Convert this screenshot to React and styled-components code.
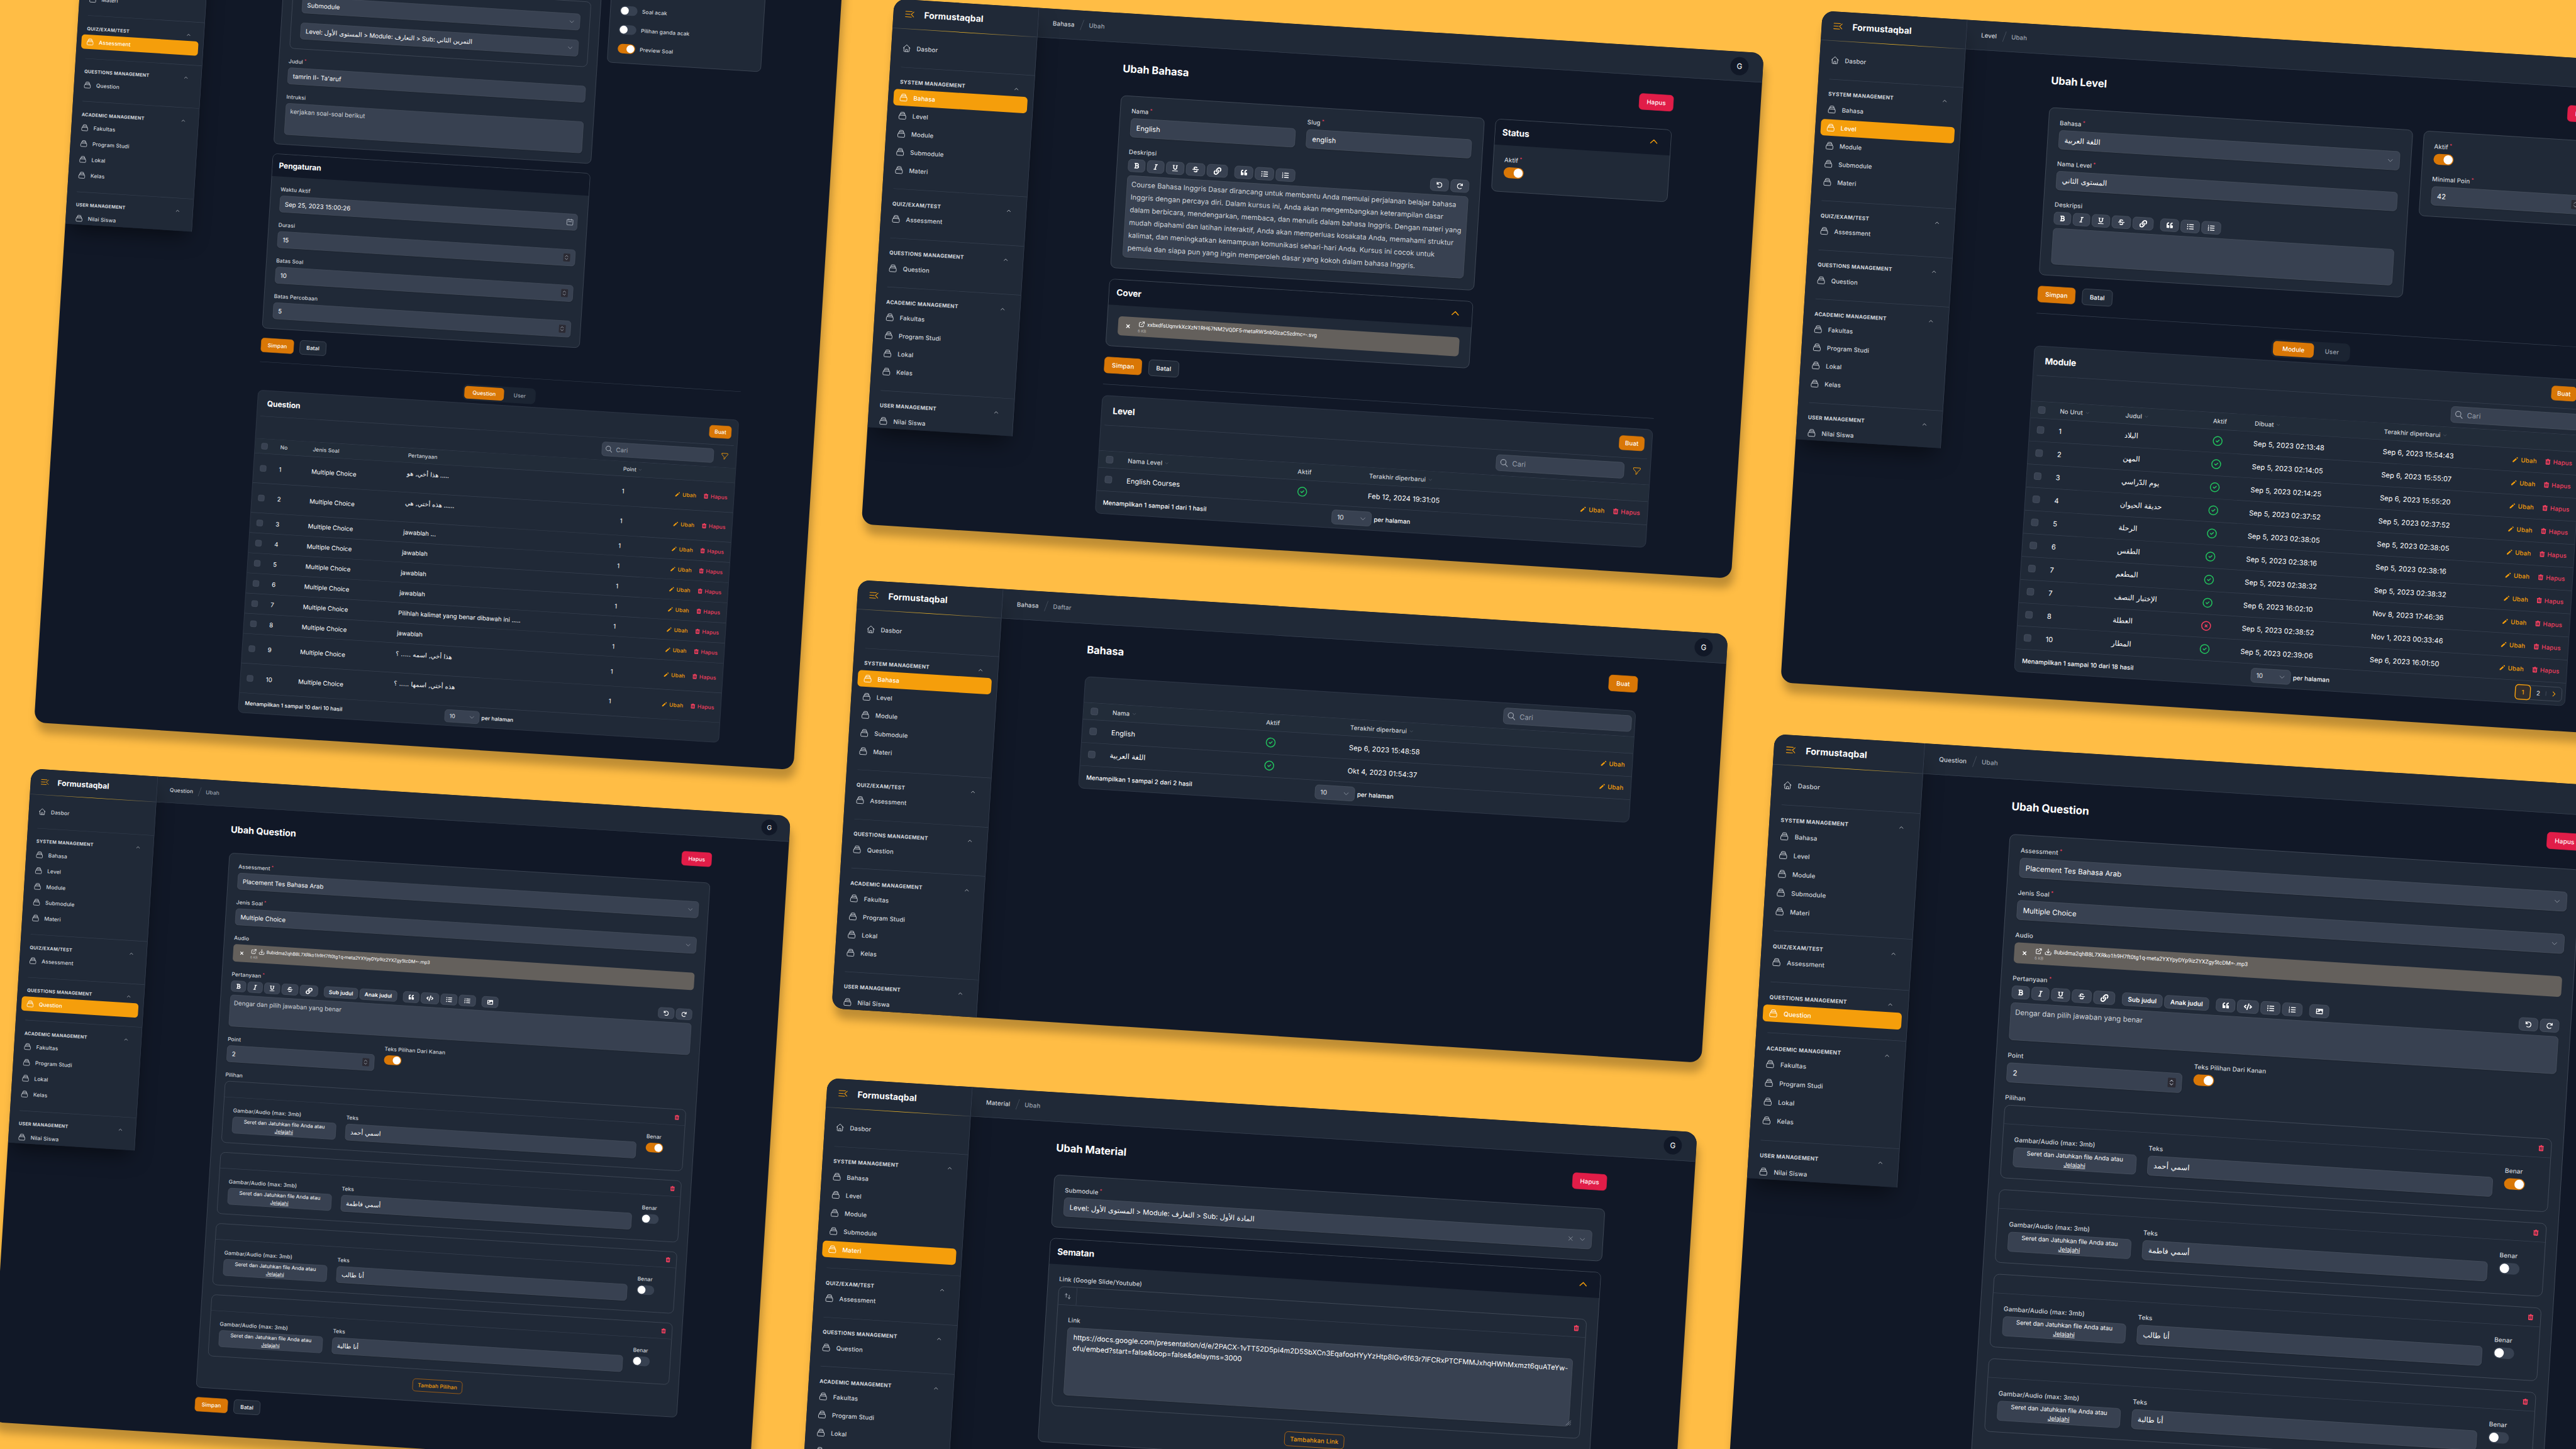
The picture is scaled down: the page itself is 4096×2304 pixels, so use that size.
import React from "react";
import styled, { createGlobalStyle, css } from "styled-components";
import { FaBold, FaItalic, FaUnderline, FaStrikethrough, FaLink, FaQuoteLeft, FaListUl, FaListOl, FaCode, FaImage, FaUndo, FaRedo } from "react-icons/fa";

const c = {
  canvas: "#ffbd45",
  page: "#111827",
  panel: "#202937",
  field: "#384151",
  line: "#374151",
  edge: "#4b5563",
  text: "#ffffff",
  soft: "#d1d5db",
  mute: "#9ca3af",
  amber: "#f59e0b",
  primary: "#d97706",
  danger: "#e11d48",
  rose: "#f43f5e",
  green: "#22c55e",
};

const type = (size, weight = 400, track = 0.004) => css`
  font-size: ${size * 0.96}px;
  font-weight: ${weight};
  letter-spacing: ${track}em;
`;

const GlobalStyle = createGlobalStyle`
  * { box-sizing: border-box; }
  html, body { margin: 0; padding: 0; background: ${c.canvas}; }
  body { font-family: Inter, "Liberation Sans", "DejaVu Sans", sans-serif; color: ${c.text}; }
`;

/* ---------- canvas and window shell ---------- */

const Canvas = styled.main`
  position: relative;
  width: 4096px;
  height: 2304px;
  overflow: hidden;
  background: ${c.canvas};
`;

const WindowFrame = styled.article`
  position: absolute;
  left: ${(p) => p.$x}px;
  top: ${(p) => p.$y}px;
  width: 1920px;
  height: ${(p) => p.$h}px;
  display: flex;
  align-items: flex-start;
  overflow: hidden;
  background: ${c.page};
  border-radius: ${(p) => 18.5 / p.$s}px;
  transform: rotate(3.58deg) scale(${(p) => p.$s});
  transform-origin: 0 0;
  box-shadow: ${(p) => `${4.3 / p.$s}px ${16 / p.$s}px ${14 / p.$s}px rgba(0,0,0,0.25)`};
`;

const Sidebar = styled.aside`
  position: relative;
  z-index: 1;
  flex: none;
  width: 320px;
  height: 946px;
  overflow: hidden;
  background: ${c.panel};
  border-right: 1px solid ${c.line};
`;

const SidebarShade = styled.div`
  position: relative;
  z-index: 1;
  flex: none;
  height: 946px;
  box-shadow: 0 25px 50px -12px rgba(0, 0, 0, 0.5);
`;

const Brand = styled.div`
  height: 64px;
  display: flex;
  align-items: center;
  gap: 20px;
  padding-left: 24px;
`;

const BrandName = styled.span`
  ${type(20, 700, 0.005)}
`;

const BrandLine = styled.div`
  height: 1px;
  background: linear-gradient(to right, ${c.line}, #fbbf24, ${c.line});
`;

const Nav = styled.nav`
  padding: 24px 12px 0;
`;

const NavItem = styled.div`
  height: 36px;
  width: 295px;
  display: flex;
  align-items: center;
  gap: 12px;
  padding: 0 12px;
  border-radius: 8px;
  ${type(14, 500, 0.01)}
  color: ${(p) => (p.$active ? "#fff" : c.soft)};
  background: ${(p) => (p.$active ? c.amber : "transparent")};
`;

const NavGroup = styled.section`
  margin-top: 23.5px;
`;

const NavRule = styled.div`
  height: 1px;
  margin: 0 -12px 0 12px;
  background: ${c.line};
`;

const NavHeading = styled.div`
  height: 20px;
  margin: 22.5px 20px 5.5px 12px;
  display: flex;
  align-items: center;
  justify-content: space-between;
  color: ${c.soft};
  ${type(12, 700, 0.034)}
`;

const NavList = styled.div`
  display: flex;
  flex-direction: column;
  gap: 4px;
`;

const Main = styled.div`
  flex: 1;
  min-width: 0;
`;

const Topbar = styled.header`
  height: 65px;
  display: flex;
  align-items: center;
  padding: 0 32px 1px;
  background: ${c.panel};
  border-bottom: 1px solid ${c.line};
`;

const Crumbs = styled.div`
  flex: 1;
  display: flex;
  align-items: center;
  gap: 15px;
  ${type(14, 500, 0.01)}
  color: ${c.soft};
`;

const CrumbSlash = styled.i`
  width: 1px;
  height: 24px;
  margin-left: 1px;
  background: ${c.edge};
  transform: rotate(17deg);
`;

const CrumbHere = styled.span`
  color: ${c.mute};
`;

const Avatar = styled.div`
  width: 40px;
  height: 40px;
  border-radius: 50%;
  display: grid;
  place-items: center;
  background: ${c.page};
  ${type(17)}
`;

const Content = styled.div`
  width: 1216px;
  margin: 0 auto;
  padding-top: 40px;
`;

const PageHead = styled.div`
  height: 36px;
  margin-bottom: 40px;
  display: flex;
  align-items: center;
  justify-content: space-between;
`;

const PageTitle = styled.h1`
  margin: 0;
  padding-bottom: 3px;
  ${type(24, 700, -0.006)}
`;

const Button = styled.span`
  height: ${(p) => (p.$small ? 32 : 36)}px;
  padding: 0 ${(p) => (p.$small ? 12 : 16)}px;
  display: inline-flex;
  align-items: center;
  border-radius: 8px;
  border: 1px solid ${(p) => ({ gray: c.edge, outline: c.primary, danger: c.danger }[p.$tone] || c.primary)};
  background: ${(p) => ({ danger: c.danger, gray: c.panel, outline: "transparent" }[p.$tone] || c.primary)};
  color: ${(p) => (p.$tone === "outline" ? c.amber : "#fff")};
  ${type(14, 500, 0.01)}
`;

const ButtonRow = styled.div`
  display: flex;
  gap: 15px;
  margin-top: 24px;
`;

const Rule = styled.div`
  height: 1px;
  margin: 24px 0;
  background: ${c.line};
`;

/* ---------- forms ---------- */

const Columns = styled.div`
  display: grid;
  grid-template-columns: ${(p) => p.$cols};
  gap: 24px;
  align-items: start;
`;

const Stack = styled.div`
  display: flex;
  flex-direction: column;
  gap: 24px;
`;

const Card = styled.section`
  border: 1px solid ${c.edge};
  border-radius: 12px;
  background: ${c.panel};
  overflow: hidden;
`;

const CardHead = styled.div`
  height: 56px;
  padding: 0 25px 0 16px;
  display: flex;
  align-items: center;
  justify-content: space-between;
  background: ${c.page};
  ${type(20, 700, -0.01)}
`;

const CardBody = styled.div`
  display: flex;
  flex-direction: column;
  gap: 24px;
  padding: ${(p) => p.$top || 24}px 24px ${(p) => p.$bottom || 24}px;
`;

const FieldBox = styled.div`
  display: flex;
  flex-direction: column;
  gap: 8px;
  align-items: ${(p) => (p.$start ? "flex-start" : "stretch")};
`;

const Label = styled.div`
  height: 16px;
  line-height: 16px;
  white-space: nowrap;
  color: ${c.soft};
  ${type(14, 500, 0.01)}
`;

const Star = styled.sup`
  margin-left: 3px;
  font-size: 10px;
  line-height: 0;
  color: ${c.rose};
`;

const Input = styled.div`
  height: ${(p) => p.$h || 42}px;
  display: flex;
  align-items: center;
  justify-content: space-between;
  padding: 0 12px;
  border: 1px solid ${c.edge};
  border-radius: 8px;
  background: ${c.field};
  box-shadow: 0 1px 2px rgba(0, 0, 0, 0.2);
  white-space: nowrap;
  ${type(16)}
`;

const InputIcons = styled.span`
  display: flex;
  align-items: center;
  gap: 10px;
  margin-right: ${(p) => (p.$edge ? -4 : 0)}px;
  color: ${c.mute};
`;

const Spinner = styled.span`
  width: 17px;
  height: 20px;
  border-radius: 2px;
  display: grid;
  place-items: center;
  background: #2b2a33;
  color: ${c.mute};
`;

const Area = styled.div`
  height: ${(p) => p.$h}px;
  padding: ${(p) => p.$pad || "5px 9px"};
  border: 1px solid ${c.edge};
  border-radius: 8px;
  background: ${c.field};
  box-shadow: 0 1px 2px rgba(0, 0, 0, 0.2);
  color: ${(p) => (p.$bright ? "#fff" : c.soft)};
  line-height: ${(p) => p.$lh || 28}px;
  white-space: pre;
  ${type(16)}
  display: flex;
  justify-content: space-between;
`;

const Grip = styled.span`
  align-self: flex-end;
  margin: 0 -12px -8px 0;
  width: 14px;
  height: 14px;
  color: ${c.mute};
  flex: none;
  display: flex;
`;

const Tools = styled.div`
  height: 28px;
  display: flex;
  align-items: center;
  gap: 15px;
`;

const ToolGroup = styled.div`
  display: flex;
  gap: 4px;
  margin-left: ${(p) => (p.$end ? "auto" : 0)};
`;

const Tool = styled.span`
  height: 28px;
  width: ${(p) => p.$w}px;
  display: grid;
  place-items: center;
  border: 1px solid ${c.edge};
  border-radius: 8px;
  background: ${c.field};
  white-space: nowrap;
  ${type(14, 600)}
`;

const FileRow = styled.div`
  height: ${(p) => p.$h || 42}px;
  display: flex;
  align-items: center;
  gap: 16px;
  padding: 0 16px;
  border-radius: 8px;
  background: #64605c;
`;

const FileText = styled.div`
  display: flex;
  flex-direction: column;
`;

const FileName = styled.span`
  display: flex;
  align-items: center;
  gap: 4px;
  white-space: nowrap;
  font-family: Roboto, sans-serif;
  font-size: 11.85px;
  line-height: 17px;
`;

const FileSize = styled.span`
  font-family: Roboto, sans-serif;
  font-size: 9px;
  line-height: 12px;
  color: #b5b2af;
`;

const Track = styled.span`
  width: 44px;
  height: 24px;
  padding: 2px;
  display: flex;
  flex: none;
  justify-content: ${(p) => (p.$on ? "flex-end" : "flex-start")};
  border-radius: 12px;
  background: ${(p) => (p.$on ? c.primary : "#374151")};
`;

const Knob = styled.i`
  width: 20px;
  height: 20px;
  border-radius: 50%;
  background: #fff;
`;

const ToggleLine = styled.div`
  height: 24px;
  display: flex;
  align-items: center;
  gap: 12px;
  color: ${c.soft};
  ${type(14, 500, 0.01)}
`;

const Panel = styled(Card)`
  height: ${(p) => p.$h}px;
  padding: 0 24px 24px;
  display: flex;
  flex-direction: column;
  justify-content: flex-end;
  gap: 24px;
`;

const Fieldset = styled.div`
  border: 1px solid ${c.edge};
  border-radius: 12px;
  padding: 31px 24px 24px;
  display: flex;
  flex-direction: column;
  gap: 24px;
`;

const Repeater = styled.div`
  border: 1px solid ${c.edge};
  border-radius: 12px;
  overflow: hidden;
`;

const RepeaterHead = styled.div`
  height: 40px;
  display: flex;
  align-items: center;
  border-bottom: 1px solid ${c.line};
  padding-right: 13px;
  color: ${c.rose};
`;

const SortCell = styled.span`
  width: 40px;
  align-self: stretch;
  display: grid;
  place-items: center;
  border-right: 1px solid ${c.line};
  color: ${c.mute};
`;

const Push = styled.span`
  margin-left: auto;
  display: flex;
`;

const Drop = styled.div`
  height: 42px;
  display: grid;
  place-items: center;
  align-content: center;
  border: 1px solid ${c.edge};
  border-radius: 8px;
  background: ${c.field};
  line-height: 19px;
  text-align: center;
  ${type(13.4, 400, 0)}
`;

const Centered = styled.div`
  display: flex;
  justify-content: center;
`;

/* ---------- tables ---------- */

const Tabs = styled.div`
  width: fit-content;
  height: 40px;
  margin: 0 auto 7px;
  padding: 4px;
  display: flex;
  gap: 4px;
  border-radius: 12px;
  background: #1b2432;
`;

const Tab = styled.span`
  height: 32px;
  padding: 0 20.5px;
  display: flex;
  align-items: center;
  border-radius: 8px;
  background: ${(p) => (p.$active ? c.primary : "transparent")};
  color: ${(p) => (p.$active ? "#fff" : c.mute)};
  ${type(14, 500, 0.01)}
`;

const TableCard = styled(Card)`
  border-color: ${c.line};
`;

const TableHead = styled.div`
  height: 65px;
  margin: 0 8px;
  padding: 0 8px 0 16px;
  display: flex;
  justify-content: space-between;
  align-items: center;
  border-bottom: 1px solid ${c.line};
  ${type(20, 700, -0.01)}
`;

const TableTools = styled.div`
  height: 57px;
  padding: 0 7px;
  display: flex;
  align-items: center;
  justify-content: flex-end;
  gap: 18px;
  border-bottom: 1px solid ${c.line};
  color: ${c.amber};
`;

const FilterSpot = styled.span`
  display: flex;
  margin-right: 12px;
`;

const SearchBox = styled.div`
  width: 283px;
  height: 36px;
  display: flex;
  align-items: center;
  gap: 8px;
  padding: 0 7px;
  border: 1px solid ${c.edge};
  border-radius: 8px;
  background: ${c.field};
  color: ${c.mute};
  ${type(16)}
`;

const HeadRow = styled.div`
  height: 37px;
  display: grid;
  grid-template-columns: ${(p) => p.$cols};
  align-items: center;
  padding: 0 16px;
  background: #222c39;
  border-bottom: 1px solid ${c.line};
  color: ${c.soft};
  ${type(14, 500, 0.01)}
`;

const HeadCell = styled.span`
  display: flex;
  align-items: center;
  gap: 5px;
  white-space: nowrap;
`;

const Row = styled.div`
  height: ${(p) => (p.$tall ? 75 : 51)}px;
  display: grid;
  grid-template-columns: ${(p) => p.$cols};
  align-items: center;
  padding: 0 16px;
  border-bottom: 1px solid ${c.line};
  white-space: nowrap;
  ${type(16)}
`;

const Cell = styled.span`
  display: flex;
  padding-bottom: ${(p) => (p.$lift ? 22 : 0)}px;
`;

const Check = styled.i`
  width: 16px;
  height: 16px;
  border: 1px solid ${c.edge};
  border-radius: 4px;
  background: ${c.field};
`;

const Actions = styled.span`
  display: flex;
  justify-content: flex-end;
  gap: 16px;
`;

const Action = styled.span`
  display: flex;
  align-items: center;
  gap: 4px;
  color: ${(p) => (p.$danger ? c.rose : c.amber)};
  ${type(14, 500, 0.018)}
`;

const TableFoot = styled.div`
  height: 49px;
  padding: 0 7px 0 15px;
  display: grid;
  grid-template-columns: 1fr auto 1fr;
  align-items: center;
  ${type(14, 500, 0.008)}
`;

const PerPage = styled.span`
  display: flex;
  align-items: center;
  gap: 5px;
  margin-right: 8px;
`;

const PageSelect = styled.span`
  width: 88px;
  height: 32px;
  display: flex;
  align-items: center;
  justify-content: space-between;
  padding: 0 10px 0 11px;
  border: 1px solid ${c.edge};
  border-radius: 8px;
  background: ${c.field};
  color: #e5e7eb;
  ${type(14.5)}
`;

const Pager = styled.span`
  justify-self: end;
  height: 32px;
  display: flex;
  align-items: center;
  border: 1px solid ${c.edge};
  border-radius: 8px;
  color: ${c.soft};
`;

const PagerItem = styled.span`
  width: ${(p) => p.$w}px;
  height: ${(p) => (p.$active ? 34 : 32)}px;
  margin-left: ${(p) => (p.$active ? -1 : 0)}px;
  display: grid;
  place-items: center;
  border-radius: 8px;
  ${(p) => p.$active && css`
    border: 2px solid ${c.amber};
    background: #332e2d;
  `}
  color: ${(p) => (p.$active || p.$next ? c.amber : c.soft)};
`;

const PagerLine = styled.i`
  width: 1px;
  height: 10px;
  background: ${c.edge};
`;

const ArText = styled.bdi`
  font-family: "DejaVu Sans", sans-serif;
  font-size: 1.03em;
  line-height: 1;
  letter-spacing: 0;
`;

/* ---------- icons ---------- */

const paths = {
  collection: "M19 11H5m14 0a2 2 0 012 2v6a2 2 0 01-2 2H5a2 2 0 01-2-2v-6a2 2 0 012-2m14 0V9a2 2 0 00-2-2M5 11V9a2 2 0 012-2m0 0V5a2 2 0 012-2h6a2 2 0 012 2v2M7 7h10",
  home: "M3 12l2-2m0 0l7-7 7 7M5 10v10a1 1 0 001 1h12a1 1 0 001-1V10m0 0l2 2M9.5 21v-5a1 1 0 011-1h3a1 1 0 011 1v5",
  menu: "M3 6h14M3 12h10M3 18h13M21 6.5L15.5 12l5.500 5.500",
  up: "M5 15l7-7 7 7",
  down: "M19 9l-7 7-7-7",
  right: "M9 5l7 7-7 7",
  ok: "M9 12l2 2 4-4m6 2a9 9 0 11-18 0 9 9 0 0118 0z",
  no: "M10 14l2-2m0 0l2-2m-2 2l-2-2m2 2l2 2m7-2a9 9 0 11-18 0 9 9 0 0118 0z",
  filter: "M3 4a1 1 0 011-1h16a1 1 0 011 1v2.586a1 1 0 01-.293.707l-6.414 6.414a1 1 0 00-.293.707V17l-4 4v-6.586a1 1 0 00-.293-.707L3.293 7.293A1 1 0 013 6.586V4z",
  search: "M21 21l-6-6m2-5a7 7 0 11-14 0 7 7 0 0114 0z",
  external: "M10 6H6a2 2 0 00-2 2v10a2 2 0 002 2h10a2 2 0 002-2v-4M14 4h6m0 0v6m0-6L10 14",
  download: "M3 14v5a2 2 0 002 2h14a2 2 0 002-2v-5M7 11l5 5 5-5M12 16V3",
  calendar: "M8 7V3m8 4V3m-9 8h10M5 21h14a2 2 0 002-2V7a2 2 0 00-2-2H5a2 2 0 00-2 2v12a2 2 0 002 2z",
  sort: "M7 16V4m0 0L3 8m4-4l4 4m6 0v12m0 0l4-4m-4 4l-4-4",
  close: "M6 6l12 12M18 6L6 18",
  spin: "M7 9l5-5 5 5M7 15l5 5 5-5",
  grip: "M22 4L4 22M22 11L11 22M22 18l-4 4",
};

const solids = {
  pencil: "M13.586 3.586a2 2 0 112.828 2.828l-.793.793-2.828-2.828.793-.793zM11.379 5.793L3 14.172V17h2.828l8.380-8.379-2.830-2.828z",
  trash: "M9 2a1 1 0 00-.894.553L7.382 4H4a1 1 0 000 2v10a2 2 0 002 2h8a2 2 0 002-2V6a1 1 0 100-2h-3.382l-.724-1.447A1 1 0 0011 2H9zM7 8a1 1 0 012 0v6a1 1 0 11-2 0V8zm5-1a1 1 0 00-1 1v6a1 1 0 102 0V8a1 1 0 00-1-1z",
};

const Icon = ({ name, size = 20, width = 1.5, color = "currentColor" }) =>
  solids[name] ? (
    <svg width={size} height={size} viewBox="0 0 20 20" fill={color} fillRule="evenodd">
      <path d={solids[name]} />
    </svg>
  ) : (
    <svg width={size} height={size} viewBox="0 0 24 24" fill="none" stroke={color} strokeWidth={width} strokeLinecap="round" strokeLinejoin="round">
      <path d={paths[name]} />
    </svg>
  );

/* ---------- composed parts ---------- */

const navGroups = [
  ["SYSTEM MANAGEMENT", ["Bahasa", "Level", "Module", "Submodule", "Materi"]],
  ["QUIZ/EXAM/TEST", ["Assessment"]],
  ["QUESTIONS MANAGEMENT", ["Question"]],
  ["ACADEMIC MANAGEMENT", ["Fakultas", "Program Studi", "Lokal", "Kelas"]],
  ["USER MANAGEMENT", ["Nilai Siswa"]],
];

const Ar = ({ children }) => <ArText lang="ar">{children}</ArText>;

const Toggle = ({ on }) => (
  <Track $on={on}>
    <Knob />
  </Track>
);

const Field = ({ label, req, start, children }) => (
  <FieldBox $start={start}>
    {label && (
      <Label>
        {label}
        {req && <Star>*</Star>}
      </Label>
    )}
    {children}
  </FieldBox>
);

const Select = ({ children, clear }) => (
  <Input>
    <span>{children}</span>
    <InputIcons>
      {clear && <Icon name="close" size={16} width={1.5} />}
      <Icon name="down" size={16} />
    </InputIcons>
  </Input>
);

const NumberInput = ({ children }) => (
  <Input>
    {children}
    <Spinner>
      <Icon name="spin" size={16} width={2} />
    </Spinner>
  </Input>
);

const Toolbar = ({ full, history = true }) => (
  <Tools>
    <ToolGroup>
      <Tool $w={38}><FaBold size={14} /></Tool>
      <Tool $w={38}><FaItalic size={14} /></Tool>
      <Tool $w={40}><FaUnderline size={14} /></Tool>
      <Tool $w={42}><FaStrikethrough size={14} /></Tool>
      <Tool $w={46}><FaLink size={17} /></Tool>
    </ToolGroup>
    {full && (
      <ToolGroup>
        <Tool $w={86}>Sub judul</Tool>
        <Tool $w={95}>Anak judul</Tool>
      </ToolGroup>
    )}
    <ToolGroup>
      <Tool $w={41}><FaQuoteLeft size={14} /></Tool>
      {full && <Tool $w={46}><FaCode size={18} /></Tool>}
      <Tool $w={42}><FaListUl size={15} /></Tool>
      <Tool $w={43}><FaListOl size={15} /></Tool>
    </ToolGroup>
    {full && (
      <ToolGroup>
        <Tool $w={42}><FaImage size={15} /></Tool>
      </ToolGroup>
    )}
    {history && (
      <ToolGroup $end>
        <Tool $w={41}><FaUndo size={13} /></Tool>
        <Tool $w={41}><FaRedo size={13} /></Tool>
      </ToolGroup>
    )}
  </Tools>
);

const FileItem = ({ name, download, h }) => (
  <FileRow $h={h}>
    <Icon name="close" size={12} width={4} />
    <FileText>
      <FileName>
        <Icon name="external" size={16} width={2} />
        {download && <Icon name="download" size={16} width={2} />}
        {name}
      </FileName>
      <FileSize>6 KB</FileSize>
    </FileText>
  </FileRow>
);

const Submit = () => (
  <ButtonRow>
    <Button>Simpan</Button>
    <Button $tone="gray">Batal</Button>
  </ButtonRow>
);

const Th = ({ children, sort }) => (
  <HeadCell>
    {children}
    {sort && <Icon name="down" size={10} width={2} color="#5b6574" />}
  </HeadCell>
);

const RowActions = ({ remove }) => (
  <Actions>
    <Action>
      <Icon name="pencil" size={16} />
      Ubah
    </Action>
    {remove && (
      <Action $danger>
        <Icon name="trash" size={16} />
        Hapus
      </Action>
    )}
  </Actions>
);

const Search = () => (
  <SearchBox>
    <Icon name="search" size={20} width={2} />
    Cari
  </SearchBox>
);

const Foot = ({ children, pager }) => (
  <TableFoot>
    <span>{children}</span>
    <PerPage>
      <PageSelect>
        10
        <Icon name="down" size={16} color={c.mute} />
      </PageSelect>
      per halaman
    </PerPage>
    {pager && (
      <Pager>
        <PagerItem $w={35} $active>1</PagerItem>
        <PagerItem $w={33}>2</PagerItem>
        <PagerLine />
        <PagerItem $w={34} $next>
          <Icon name="right" size={16} width={2.2} />
        </PagerItem>
      </Pager>
    )}
  </TableFoot>
);

const State = ({ ok }) => <Icon name={ok ? "ok" : "no"} size={26} width={1.9} color={ok ? c.green : c.rose} />;

const AdminWindow = ({ x, y, s, h, active, crumb, here = "Ubah", title, action, children }) => (
  <WindowFrame $x={x} $y={y} $s={s} $h={h}>
    <SidebarShade>
      <Sidebar>
        <Brand>
          <Icon name="menu" size={24} color={c.amber} />
          <BrandName>Formustaqbal</BrandName>
        </Brand>
        <BrandLine />
        <Nav>
          <NavItem>
            <Icon name="home" />
            Dasbor
          </NavItem>
          {navGroups.map(([heading, items]) => (
            <NavGroup key={heading}>
              <NavRule />
              <NavHeading>
                {heading}
                <Icon name="up" size={12} width={2} />
              </NavHeading>
              <NavList>
                {items.map((item) => (
                  <NavItem key={item} $active={item === active}>
                    <Icon name="collection" />
                    {item}
                  </NavItem>
                ))}
              </NavList>
            </NavGroup>
          ))}
        </Nav>
      </Sidebar>
    </SidebarShade>
    <Main>
      <Topbar>
        <Crumbs>
          {crumb}
          <CrumbSlash />
          <CrumbHere>{here}</CrumbHere>
        </Crumbs>
        <Avatar>G</Avatar>
      </Topbar>
      <Content>
        <PageHead>
          <PageTitle>{title}</PageTitle>
          {action || <Button $tone="danger">Hapus</Button>}
        </PageHead>
        {children}
      </Content>
    </Main>
  </WindowFrame>
);

/* ---------- screens ---------- */

const threeCols = "802.67px 1fr";

const course = `Course Bahasa Inggris Dasar dirancang untuk membantu Anda memulai perjalanan belajar bahasa
Inggris dengan percaya diri. Dalam kursus ini, Anda akan mengembangkan keterampilan dasar
dalam berbicara, mendengarkan, membaca, dan menulis dalam bahasa Inggris. Dengan materi yang
mudah dipahami dan latihan interaktif, Anda akan memperluas kosakata Anda, memahami struktur
kalimat, dan meningkatkan kemampuan komunikasi sehari-hari Anda. Kursus ini cocok untuk
pemula dan siapa pun yang ingin memperoleh dasar yang kokoh dalam bahasa Inggris.`;

const languageCols = "48px 375px 158px 1fr auto";

const LanguageEdit = () => (
  <AdminWindow x={1422.4} y={-1.9} s={0.7216} h={1160} active="Bahasa" crumb="Bahasa" title="Ubah Bahasa">
    <Columns $cols={threeCols}>
      <Stack>
        <Card>
          <CardBody>
            <Columns $cols="1fr 1fr">
              <Field label="Nama" req><Input>English</Input></Field>
              <Field label="Slug" req><Input>english</Input></Field>
            </Columns>
            <Field label="Deskripsi">
              <Toolbar />
              <Area $h={181}>{course}</Area>
            </Field>
          </CardBody>
        </Card>
        <Card>
          <CardHead>
            Cover
            <Icon name="up" size={24} color={c.amber} width={2} />
          </CardHead>
          <CardBody>
            <FileItem name="xxbxdfsUqmrkXcXzN1RH67NM2VQDF5-metaRW5nbGlzaC5zdmc=-.svg" />
          </CardBody>
        </Card>
      </Stack>
      <Card>
        <CardHead>
          Status
          <Icon name="up" size={24} color={c.amber} width={2} />
        </CardHead>
        <CardBody $bottom={30}>
          <Field label="Aktif" req start><Toggle on /></Field>
        </CardBody>
      </Card>
    </Columns>
    <Submit />
    <Rule />
    <TableCard>
      <TableHead>
        Level
        <Button $small>Buat</Button>
      </TableHead>
      <TableTools>
        <Search />
        <FilterSpot><Icon name="filter" size={20} width={1.6} /></FilterSpot>
      </TableTools>
      <HeadRow $cols={languageCols}>
        <Check />
        <Th sort>Nama Level</Th>
        <Th>Aktif</Th>
        <Th sort>Terakhir diperbarui</Th>
      </HeadRow>
      <Row $cols={languageCols}>
        <Check />
        <Cell>English Courses</Cell>
        <State ok />
        <Cell>Feb 12, 2024 19:31:05</Cell>
        <RowActions remove />
      </Row>
      <Foot>Menampilkan 1 sampai 1 dari 1 hasil</Foot>
    </TableCard>
  </AdminWindow>
);

const listCols = "48px 339px 186px 1fr auto";

const LanguageList = () => (
  <AdminWindow x={1364.7} y={921.8} s={0.7216} h={946} active="Bahasa" crumb="Bahasa" here="Daftar" title="Bahasa" action={<Button>Buat</Button>}>
    <TableCard>
      <TableTools>
        <Search />
      </TableTools>
      <HeadRow $cols={listCols}>
        <Check />
        <Th sort>Nama</Th>
        <Th>Aktif</Th>
        <Th sort>Terakhir diperbarui</Th>
      </HeadRow>
      <Row $cols={listCols}>
        <Check />
        <Cell>English</Cell>
        <State ok />
        <Cell>Sep 6, 2023 15:48:58</Cell>
        <RowActions />
      </Row>
      <Row $cols={listCols}>
        <Check />
        <Cell><Ar>اللغة العربية</Ar></Cell>
        <State ok />
        <Cell>Okt 4, 2023 01:54:37</Cell>
        <RowActions />
      </Row>
      <Foot>Menampilkan 1 sampai 2 dari 2 hasil</Foot>
    </TableCard>
  </AdminWindow>
);

const MaterialEdit = () => (
  <AdminWindow x={1316.1} y={1713.9} s={0.7216} h={946} active="Materi" crumb="Material" title="Ubah Material">
    <Stack>
      <Card>
        <CardBody>
          <Field label="Submodule" req>
            <Select clear>
              Level: <Ar>المستوى الأول</Ar> &gt; Module: <Ar>التعارف</Ar> &gt; Sub: <Ar>المادة الأول</Ar>
            </Select>
          </Field>
        </CardBody>
      </Card>
      <Card>
        <CardHead>
          Sematan
          <Icon name="up" size={24} color={c.amber} width={2} />
        </CardHead>
        <CardBody>
          <Field label="Link (Google Slide/Youtube)">
            <Repeater>
              <RepeaterHead>
                <SortCell><Icon name="sort" size={16} width={2} /></SortCell>
                <Push><Icon name="trash" size={16} /></Push>
              </RepeaterHead>
              <CardBody>
                <Field label="Link">
                  <Area $h={150} $pad="9px 13px" $lh={24} $bright>
                    {"https://docs.google.com/presentation/d/e/2PACX-1vTT52D5pi4m2D5SbXCn3EqafooHYyYzHtp8lGv6f63r7lFCRxPTCFMMJxhqHWhMxmzt6quATeYw-\nofu/embed?start=false&loop=false&delayms=3000"}
                    <Grip><Icon name="grip" size={14} /></Grip>
                  </Area>
                </Field>
              </CardBody>
            </Repeater>
          </Field>
          <Centered><Button $small $tone="outline">Tambahkan Link</Button></Centered>
        </CardBody>
      </Card>
    </Stack>
  </AdminWindow>
);

const levelCols = "48px 145px 193px 92px 285.5px 1fr";
const modules = [
  ["1", "البلاد", true, "Sep 5, 2023 02:13:48", "Sep 6, 2023 15:54:43"],
  ["2", "المهن", true, "Sep 5, 2023 02:14:05", "Sep 6, 2023 15:55:07"],
  ["3", "يوم الدّراسي", true, "Sep 5, 2023 02:14:25", "Sep 6, 2023 15:55:20"],
  ["4", "حديقة الحيوان", true, "Sep 5, 2023 02:37:52", "Sep 5, 2023 02:37:52"],
  ["5", "الرحلة", true, "Sep 5, 2023 02:38:05", "Sep 5, 2023 02:38:05"],
  ["6", "الطقس", true, "Sep 5, 2023 02:38:16", "Sep 5, 2023 02:38:16"],
  ["7", "المطعم", true, "Sep 5, 2023 02:38:32", "Sep 5, 2023 02:38:32"],
  ["7", "الإختبار النصف", true, "Sep 6, 2023 16:02:10", "Nov 8, 2023 17:46:36"],
  ["8", "العطلة", false, "Sep 5, 2023 02:38:52", "Nov 1, 2023 00:33:46"],
  ["10", "المطار", true, "Sep 5, 2023 02:39:06", "Sep 6, 2023 16:01:50"],
];

const LevelEdit = () => (
  <AdminWindow x={2898.1} y={16.7} s={0.7217} h={1483} active="Level" crumb="Level" title="Ubah Level">
    <Columns $cols={threeCols}>
      <Card>
        <CardBody>
          <Field label="Bahasa" req><Select><Ar>اللغة العربية</Ar></Select></Field>
          <Field label="Nama Level" req><Input><Ar>المستوى الثاني</Ar></Input></Field>
          <Field label="Deskripsi">
            <Toolbar history={false} />
            <Area $h={80} />
          </Field>
        </CardBody>
      </Card>
      <Card>
        <CardBody>
          <Field label="Aktif" req start><Toggle on /></Field>
          <Field label="Minimal Poin" req><NumberInput>42</NumberInput></Field>
        </CardBody>
      </Card>
    </Columns>
    <Submit />
    <Rule />
    <Tabs>
      <Tab $active>Module</Tab>
      <Tab>User</Tab>
    </Tabs>
    <TableCard>
      <TableHead>
        Module
        <Button $small>Buat</Button>
      </TableHead>
      <TableTools>
        <Search />
      </TableTools>
      <HeadRow $cols={levelCols}>
        <Check />
        <Th sort>No Urut</Th>
        <Th sort>Judul</Th>
        <Th>Aktif</Th>
        <Th sort>Dibuat</Th>
        <Th sort>Terakhir diperbarui</Th>
      </HeadRow>
      {modules.map(([no, name, ok, made, changed], i) => (
        <Row key={i} $cols={levelCols + " auto"}>
          <Check />
          <Cell>{no}</Cell>
          <Cell><Ar>{name}</Ar></Cell>
          <State ok={ok} />
          <Cell>{made}</Cell>
          <Cell>{changed}</Cell>
          <RowActions remove />
        </Row>
      ))}
      <Foot pager>Menampilkan 1 sampai 10 dari 18 hasil</Foot>
    </TableCard>
  </AdminWindow>
);

const options = [
  ["اسمي أحمد", true],
  ["أسمي فاطمة", false],
  ["أنا طالب", false],
  ["أنا طالبة", false],
];

const QuestionEdit = ({ x, y, s }) => (
  <AdminWindow x={x} y={y} s={s} h={1652} active="Question" crumb="Question" title="Ubah Question">
    <Card>
      <CardBody>
        <Field label="Assessment" req><Select>Placement Tes Bahasa Arab</Select></Field>
        <Field label="Jenis Soal" req><Select>Multiple Choice</Select></Field>
        <Field label="Audio">
          <FileItem h={44} download name="8ubidma2qhB8L7XRko1h9H7ft0tg1q-meta2YXYpyDYp9iz2YXZgy5tcDM=-.mp3" />
        </Field>
        <Field label="Pertanyaan" req>
          <Toolbar full />
          <Area $h={80} $pad="6px 9px">Dengar dan pilih jawaban yang benar</Area>
        </Field>
        <Columns $cols="372.67px 1fr">
          <Field label="Point"><NumberInput>2</NumberInput></Field>
          <Field label="Teks Pilihan Dari Kanan" start><Toggle on /></Field>
        </Columns>
        <Field label="Pilihan">
          <Stack>
            {options.map(([text, right]) => (
              <Repeater key={text}>
                <RepeaterHead>
                  <Push><Icon name="trash" size={16} /></Push>
                </RepeaterHead>
                <CardBody>
                  <Columns $cols="262px 735px 1fr">
                    <Field label="Gambar/Audio (max: 3mb)">
                      <Drop>
                        <span>Seret dan Jatuhkan file Anda atau</span>
                        <u>Jelajahi</u>
                      </Drop>
                    </Field>
                    <Field label="Teks"><Input><Ar>{text}</Ar></Input></Field>
                    <Field label="Benar" start><Toggle on={right} /></Field>
                  </Columns>
                </CardBody>
              </Repeater>
            ))}
          </Stack>
        </Field>
        <Centered><Button $small $tone="outline">Tambah Pilihan</Button></Centered>
      </CardBody>
    </Card>
    <Submit />
  </AdminWindow>
);

const questionCols = "48px 82px 241px 544px 1fr";
const questions = [
  [<><Ar>هذا أخي, هو</Ar> .....</>, true],
  [<><Ar>هذه أختي, هي</Ar> ......</>, true],
  ["jawablah ..."],
  ["jawablah"],
  ["jawablah"],
  ["jawablah"],
  ["Pilihlah kalimat yang benar dibawah ini ....."],
  ["jawablah"],
  [<Ar>هذا أخي, اسمه ..... ؟</Ar>, true],
  [<Ar>هذه أختي, اسمها ..... ؟</Ar>, true],
];

const AssessmentEdit = () => (
  <AdminWindow x={141.3} y={-239.5} s={0.63} h={2207} active="Assessment" crumb="Assessment" title="Ubah Assessment">
    <Columns $cols={threeCols}>
      <Stack>
        <Card>
          <CardBody $top={122}>
            <Fieldset>
              <Select>Submodule</Select>
              <Select>
                Level: <Ar>المستوى الأول</Ar> &gt; Module: <Ar>التعارف</Ar> &gt; Sub: <Ar>التمرين الثاني</Ar>
              </Select>
            </Fieldset>
            <Field label="Judul" req><Input>tamrin II- Ta'aruf</Input></Field>
            <Field label="Intruksi"><Area $h={80} $pad="6px 11px">kerjakan soal-soal berikut</Area></Field>
          </CardBody>
        </Card>
        <Card>
          <CardHead>Pengaturan</CardHead>
          <CardBody>
            <Field label="Waktu Aktif">
              <Input>
                Sep 25, 2023 15:00:26
                <InputIcons $edge><Icon name="calendar" size={20} width={2} /></InputIcons>
              </Input>
            </Field>
            <Field label="Durasi"><NumberInput>15</NumberInput></Field>
            <Field label="Batas Soal"><NumberInput>10</NumberInput></Field>
            <Field label="Batas Percobaan"><NumberInput>5</NumberInput></Field>
          </CardBody>
        </Card>
      </Stack>
      <Panel $h={273}>
        <ToggleLine><Toggle />Soal acak</ToggleLine>
        <ToggleLine><Toggle />Pilihan ganda acak</ToggleLine>
        <ToggleLine><Toggle on />Preview Soal</ToggleLine>
      </Panel>
    </Columns>
    <Submit />
    <Rule />
    <Tabs>
      <Tab $active>Question</Tab>
      <Tab>User</Tab>
    </Tabs>
    <TableCard>
      <TableHead>
        Question
        <Button $small>Buat</Button>
      </TableHead>
      <TableTools>
        <Search />
        <FilterSpot><Icon name="filter" size={20} width={1.6} /></FilterSpot>
      </TableTools>
      <HeadRow $cols={questionCols}>
        <Check />
        <Th>No</Th>
        <Th>Jenis Soal</Th>
        <Th>Pertanyaan</Th>
        <Th sort>Point</Th>
      </HeadRow>
      {questions.map(([text, tall], i) => (
        <Row key={i} $tall={tall} $cols={questionCols + " auto"}>
          <Check />
          <Cell>{i + 1}</Cell>
          <Cell>Multiple Choice</Cell>
          <Cell $lift={tall}><span>{text}</span></Cell>
          <Cell>1</Cell>
          <RowActions remove />
        </Row>
      ))}
      <Foot>Menampilkan 1 sampai 10 dari 10 hasil</Foot>
    </TableCard>
  </AdminWindow>
);

export default function App() {
  return (
    <>
      <GlobalStyle />
      <Canvas>
        <AssessmentEdit />
        <QuestionEdit x={49.9} y={1222} s={0.63} />
        <LanguageEdit />
        <LanguageList />
        <MaterialEdit />
        <LevelEdit />
        <QuestionEdit x={2822.2} y={1167.3} s={0.748} />
      </Canvas>
    </>
  );
}
